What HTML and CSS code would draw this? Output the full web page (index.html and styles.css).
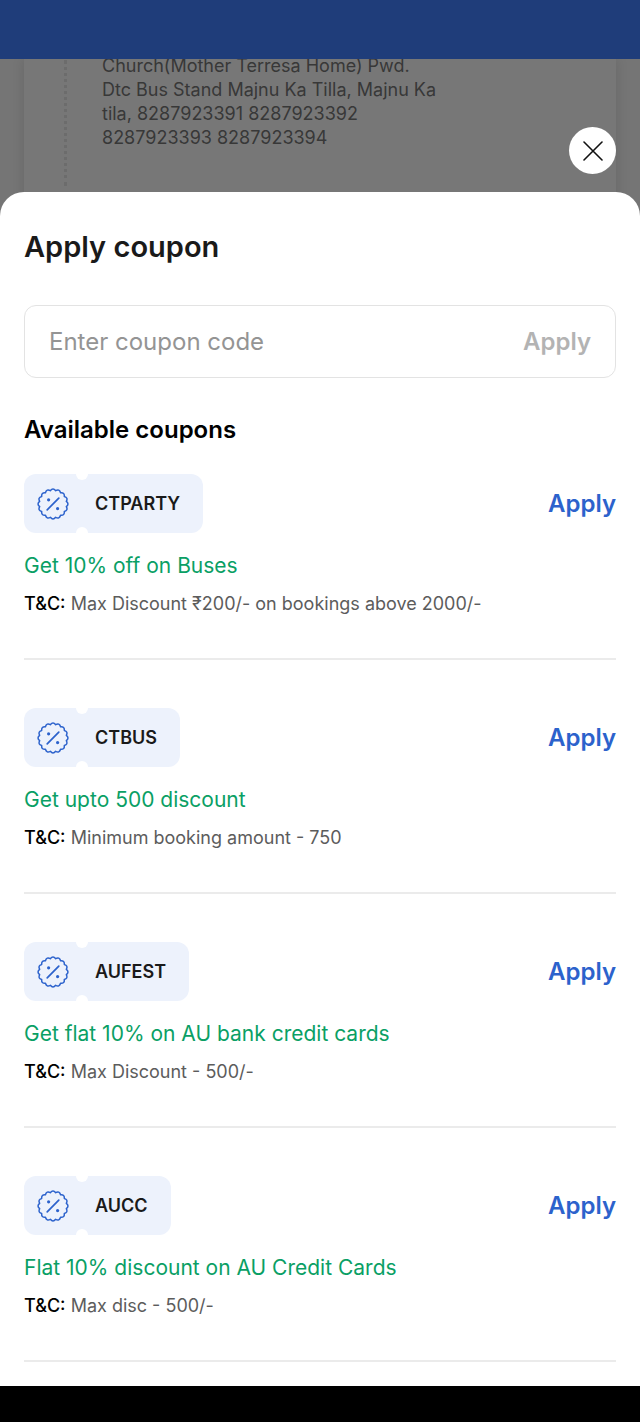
FILE: index.html
```html
<!DOCTYPE html>
<html lang="en">
<head>
    <meta charset="UTF-8">
    <meta name="viewport" content="width=device-width, initial-scale=1.0">
    <title>Apply coupon</title>
    <link rel="stylesheet" href="styles.css">
</head>
<body>
    <svg class="sprite" aria-hidden="true">
        <symbol id="badge" viewBox="-16 -16 32 32">
            <path d="M2.65-13.34Q6.35-15.34 7.56-11.31Q11.74-11.74 11.31-7.56Q15.34-6.35 13.34-2.65Q16.6 0 13.34 2.65Q15.34 6.35 11.31 7.56Q11.74 11.74 7.56 11.31Q6.35 15.34 2.65 13.34Q0 16.6-2.65 13.34Q-6.35 15.34-7.56 11.31Q-11.74 11.74-11.31 7.56Q-15.34 6.35-13.34 2.65Q-16.6 0-13.34-2.65Q-15.34-6.35-11.31-7.56Q-11.74-11.74-7.56-11.31Q-6.35-15.34-2.65-13.34Q0-16.6 2.65-13.34Z" fill="none" stroke="currentColor" stroke-width="1.5" stroke-linejoin="round"/>
            <path d="M-5.8 5.8L5.8-5.8" stroke="currentColor" stroke-width="1.7" stroke-linecap="round"/>
            <circle cx="-4.4" cy="-4.2" r="1.6" fill="currentColor"/>
            <circle cx="4.6" cy="4.6" r="1.6" fill="currentColor"/>
        </symbol>
    </svg>

    <header class="topbar"></header>

    <div class="backdrop">
        <div class="stop-card">
            <div class="route-line"></div>
            <p class="address">Church(Mother Terresa Home) Pwd. Dtc Bus Stand Majnu Ka Tilla, Majnu Ka tila, 8287923391 8287923392 8287923393 8287923394</p>
        </div>
        <button class="close" type="button" aria-label="Close">
            <svg viewBox="0 0 20 20" width="20" height="20"><path d="M1 1L19 19M19 1L1 19" stroke="currentColor" stroke-width="1.6" stroke-linecap="round"/></svg>
        </button>
    </div>

    <main class="sheet">
        <h1>Apply coupon</h1>

        <form class="code-form">
            <input type="text" aria-label="Coupon code" placeholder="Enter coupon code">
            <button class="apply" type="button" disabled>Apply</button>
        </form>

        <h2>Available coupons</h2>

        <ul class="coupons">
            <li class="coupon">
                <div class="coupon-head">
                    <div class="chip"><svg class="badge"><use href="#badge"/></svg><span>CTPARTY</span></div>
                    <button class="apply" type="button">Apply</button>
                </div>
                <p class="offer">Get 10% off on Buses</p>
                <p class="terms"><b>T&amp;C:</b> Max Discount ₹200/- on bookings above 2000/-</p>
            </li>
            <li class="coupon">
                <div class="coupon-head">
                    <div class="chip"><svg class="badge"><use href="#badge"/></svg><span>CTBUS</span></div>
                    <button class="apply" type="button">Apply</button>
                </div>
                <p class="offer">Get upto 500 discount</p>
                <p class="terms"><b>T&amp;C:</b> Minimum booking amount - 750</p>
            </li>
            <li class="coupon">
                <div class="coupon-head">
                    <div class="chip"><svg class="badge"><use href="#badge"/></svg><span>AUFEST</span></div>
                    <button class="apply" type="button">Apply</button>
                </div>
                <p class="offer">Get flat 10% on AU bank credit cards</p>
                <p class="terms"><b>T&amp;C:</b> Max Discount - 500/-</p>
            </li>
            <li class="coupon">
                <div class="coupon-head">
                    <div class="chip"><svg class="badge"><use href="#badge"/></svg><span>AUCC</span></div>
                    <button class="apply" type="button">Apply</button>
                </div>
                <p class="offer">Flat 10% discount on AU Credit Cards</p>
                <p class="terms"><b>T&amp;C:</b> Max disc - 500/-</p>
            </li>
        </ul>
    </main>

    <footer class="navbar"></footer>
</body>
</html>
```

FILE: styles.css
```css
* {
    box-sizing: border-box;
}
body {
    display: flex;
    flex-direction: column;
    min-height: 100vh;
    margin: 0;
    font-family: Inter, "Noto Sans", sans-serif;
    color: #1a1a1a;
    background-color: #ffffff;
}
h1, h2, p, ul {
    margin: 0;
    padding: 0;
}
button {
    padding: 0;
    border: 0;
    font-family: inherit;
    background: none;
    cursor: pointer;
}
.sprite {
    position: absolute;
    width: 0;
    height: 0;
}
.topbar {
    height: 59px;
    background-color: #1f3d7a;
}

/* dimmed page behind the sheet */
.backdrop {
    position: relative;
    height: 157px;
    padding: 0 24px;
    overflow: hidden;
    background-color: #757575;
}
.stop-card {
    display: flex;
    align-items: flex-end;
    gap: 35px;
    height: 100%;
    padding: 0 176px 30px 40px;
    background-color: #777777;
    box-shadow: 0 0 12px rgba(0, 0, 0, 0.12);
}
.route-line {
    flex: none;
    height: 126px;
    border-left: 3px dotted #6c6c6c;
}
.address {
    padding-bottom: 36px;
    font-size: 18px;
    line-height: 24px;
    color: #383838;
}
.close {
    position: absolute;
    top: 68px;
    right: 24px;
    display: flex;
    align-items: center;
    justify-content: center;
    width: 47px;
    height: 47px;
    border-radius: 50%;
    color: #111111;
    background-color: #ffffff;
}

/* bottom sheet */
.sheet {
    position: relative;
    margin-top: -24px;
    padding: 35px 24px 24px;
    border-radius: 24px 24px 0 0;
    background-color: #ffffff;
}
h1 {
    font-size: 29px;
    line-height: 40px;
    font-weight: 600;
}
.code-form {
    display: flex;
    align-items: center;
    height: 73px;
    margin: 38px 0 36px;
    padding: 0 24px;
    border: 1px solid #e3e3e3;
    border-radius: 12px;
}
.code-form input {
    flex: 1;
    min-width: 0;
    padding: 0;
    border: 0;
    outline: 0;
    font-family: inherit;
    font-size: 24px;
    line-height: 32px;
    color: #1a1a1a;
    background: none;
}
.code-form input::placeholder {
    color: #949494;
    opacity: 1;
}
h2 {
    margin-bottom: 28px;
    font-size: 24px;
    line-height: 32px;
    font-weight: 600;
    color: #000000;
}
.apply {
    font-size: 24px;
    line-height: 32px;
    font-weight: 600;
    color: #2c62cc;
}
.apply:disabled {
    color: #b3b3b3;
    cursor: default;
}
.coupons {
    display: flex;
    flex-direction: column;
    gap: 48px;
    list-style: none;
}
.coupon {
    padding-bottom: 40px;
    border-bottom: 2px solid #ebebeb;
}
.coupon-head {
    display: flex;
    align-items: center;
    justify-content: space-between;
    margin-bottom: 16px;
}
.chip {
    position: relative;
    display: flex;
    align-items: center;
    gap: 26px;
    height: 59px;
    padding: 0 23px 0 13px;
    border-radius: 12px;
    font-size: 18px;
    font-weight: 600;
    background-color: #edf2fc;
}
/* ticket notches */
.chip::before,
.chip::after {
    content: "";
    position: absolute;
    left: 52px;
    width: 12px;
    height: 12px;
    border-radius: 50%;
    background-color: #ffffff;
}
.chip::before {
    top: -6px;
}
.chip::after {
    bottom: -6px;
}
.badge {
    width: 32px;
    height: 32px;
    color: #2c62cc;
}
.offer {
    margin-bottom: 8px;
    font-size: 21px;
    line-height: 33px;
    color: #0a9f65;
}
.terms {
    font-size: 18px;
    line-height: 28px;
    color: #5c5c5c;
}
.terms b {
    font-weight: 500;
    color: #000000;
}

.navbar {
    flex: 1;
    min-height: 36px;
    background-color: #000000;
}
```
